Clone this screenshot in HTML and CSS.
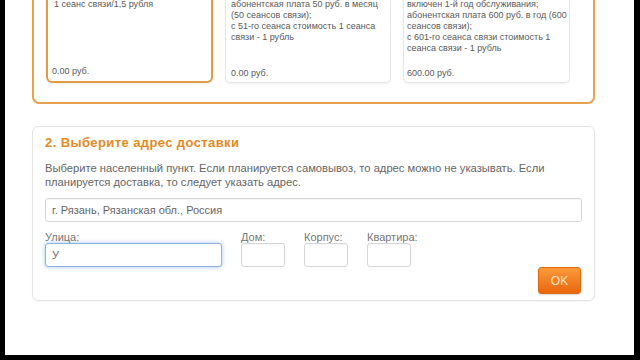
FILE: index.html
```html
<!DOCTYPE html>
<html lang="ru">
<head>
<meta charset="utf-8">
<link rel="stylesheet" href="styles.css">
</head>
<body>
<div class="screen">
  <section class="plans">
    <div class="cards">
      <div class="card selected">
        <div class="desc">1 сеанс связи/1,5 рубля</div>
        <div class="price">0.00 руб.</div>
      </div>
      <div class="card">
        <div class="desc">абонентская плата 50 руб. в месяц<br>(50 сеансов связи);<br>с 51-го сеанса стоимость 1 сеанса<br>связи - 1 рубль</div>
        <div class="price">0.00 руб.</div>
      </div>
      <div class="card third">
        <div class="desc">включен 1-й год обслуживания;<br>абонентская плата 600 руб. в год (600<br>сеансов связи);<br>с 601-го сеанса связи стоимость 1<br>сеанса связи - 1 рубль</div>
        <div class="price">600.00 руб.</div>
      </div>
    </div>
  </section>

  <section class="address">
    <h2 class="title">2. Выберите адрес доставки</h2>
    <p class="hint">Выберите населенный пункт. Если планируется самовывоз, то адрес можно не указывать. Если планируется доставка, то следует указать адрес.</p>
    <div class="input city">г. Рязань, Рязанская обл., Россия</div>
    <div class="fields">
      <div class="field street">
        <div class="label">Улица:</div>
        <div class="input focus">У</div>
      </div>
      <div class="field small">
        <div class="label">Дом:</div>
        <div class="input"></div>
      </div>
      <div class="field small">
        <div class="label">Корпус:</div>
        <div class="input"></div>
      </div>
      <div class="field small">
        <div class="label">Квартира:</div>
        <div class="input"></div>
      </div>
    </div>
    <div class="actions">
      <button class="ok">OK</button>
    </div>
  </section>
</div>
</body>
</html>
```

FILE: styles.css
```css
html, body {
  margin: 0;
  padding: 0;
  background: #000;
  width: 640px;
  height: 360px;
  overflow: hidden;
}
.screen {
  margin-left: 5px;
  width: 629px;
  height: 355px;
  background: #fff;
  overflow: hidden;
  font-family: "Liberation Sans", Arial, sans-serif;
  color: #666;
}
.plans {
  box-sizing: border-box;
  margin: -15px 0 0 27px;
  width: 563px;
  border: 2px solid #e6a04e;
  border-top: none;
  border-radius: 0 0 7px 7px;
  padding: 0 0 19px 12px;
}
.cards {
  display: flex;
  gap: 12px;
}
.card {
  box-sizing: border-box;
  width: 166px;
  height: 96px;
  margin-top: 2px;
  padding: 0 3px 3px 5px;
  border: 1px solid #e6e6e6;
  border-top: none;
  border-radius: 0 0 5px 5px;
  box-shadow: 0 1px 2px rgba(0,0,0,0.06);
  display: flex;
  flex-direction: column;
  font-size: 9px;
  line-height: 11px;
  color: #5a5a5a;
  white-space: nowrap;
}
.card.third {
  width: 167px;
  padding-left: 3px;
}
.card.selected {
  width: 167px;
  height: 98px;
  margin-top: 0;
  padding: 2px 3px 4px 4px;
  border: 2px solid #e39a44;
  border-top: none;
  border-radius: 0 0 6px 6px;
}
.card .desc {
  padding-top: 12px;
}
.card.selected .desc {
  padding-left: 2px;
  padding-top: 12px;
}
.card .price {
  margin-top: auto;
}
.address {
  margin: 22px 0 0 27px;
  width: 537px;
  border: 1px solid #e4e4e4;
  border-radius: 6px;
  box-shadow: 0 1px 2px rgba(0,0,0,0.04);
  padding: 8px 12px 6px 12px;
}
.title {
  margin: 0;
  font-size: 13px;
  line-height: 16px;
  font-weight: bold;
  letter-spacing: 0.4px;
  color: #e38a22;
}
.hint {
  margin: 10px 0 0 0;
  font-size: 11.2px;
  line-height: 14px;
  color: #666;
}
.input {
  box-sizing: border-box;
  height: 24px;
  border: 1px solid #d6d6d6;
  border-radius: 3px;
  box-shadow: inset 0 1px 1px rgba(0,0,0,0.04);
  font-size: 11px;
  line-height: 22px;
  padding: 0 6px;
  color: #666;
  background: #fff;
}
.input.city {
  margin-top: 9px;
}
.input.focus {
  border-color: #8fb2dc;
  box-shadow: 0 0 4px rgba(90,150,225,0.55);
}
.fields {
  display: flex;
  gap: 19px;
  margin-top: 9px;
}
.field.street {
  width: 177px;
}
.field.small {
  width: 44px;
}
.label {
  font-size: 11px;
  line-height: 12px;
  color: #777;
  white-space: nowrap;
}
.actions {
  display: flex;
  justify-content: flex-end;
  padding-right: 1px;
}
.ok {
  width: 43px;
  height: 27px;
  border: 1px solid #de6a12;
  border-radius: 3px;
  background: linear-gradient(#fa9a3a, #e8670f);
  color: #fde2c4;
  font-family: "Liberation Sans", Arial, sans-serif;
  font-size: 12px;
  padding: 0;
  box-shadow: 0 1px 2px rgba(0,0,0,0.15);
}
```
